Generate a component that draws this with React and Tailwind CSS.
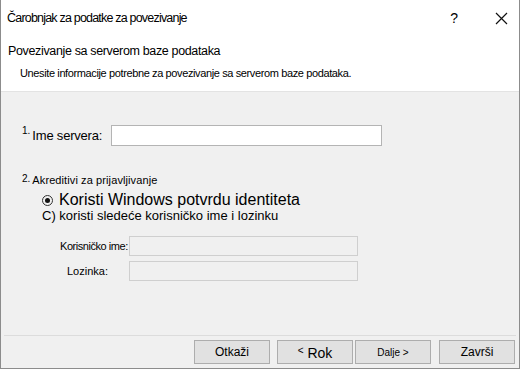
import React from 'react';

const font = { fontFamily: '"Liberation Sans", Arial, sans-serif' };

function Btn({ children, className = '' }) {
  return (
    <div className={`h-[24px] w-[76px] flex items-center justify-center bg-[#e1e1e1] border border-[#adadad] text-[#000] ${className}`}>
      {children}
    </div>
  );
}

export default function App() {
  return (
    <div className="w-[520px] h-[369px] flex flex-col bg-[#f0f0f0] border-l border-r border-b border-[#8c8c8c] text-black" style={font}>
      {/* Header */}
      <div className="h-[92px] bg-white border-b border-[#e3e3e3] flex flex-col">
        <div className="flex items-center pt-[10px] pl-[6px]">
          <div className="text-[12.5px] leading-[16px] tracking-[-0.8px] whitespace-nowrap">Čarobnjak za podatke za povezivanje</div>
          <div className="ml-auto text-[14px] leading-[16px] mr-[37px]">?</div>
          <svg width="13" height="13" viewBox="0 0 13 13" className="mr-[11px]">
            <path d="M1 1L12 12M12 1L1 12" stroke="#111" strokeWidth="1.2" />
          </svg>
        </div>
        <div className="mt-[17px] pl-[7px] text-[12.5px] leading-[16px] tracking-[-0.35px] whitespace-nowrap">Povezivanje sa serverom baze podataka</div>
        <div className="mt-[7px] pl-[19px] text-[11px] leading-[14px] tracking-[-0.38px] whitespace-nowrap">Unesite informacije potrebne za povezivanje sa serverom baze podataka.</div>
      </div>

      {/* Body */}
      <div className="flex-1 flex flex-col">
        <div className="flex items-center mt-[33px] pl-[21px]">
          <span className="text-[10px] leading-[10px] self-start mt-[1px] mr-[2px]">1.</span>
          <span className="text-[13px] leading-[20px] tracking-[-0.2px]">Ime servera:</span>
          <div className="ml-[9px] w-[271px] h-[21px] bg-white border border-[#b4b4b4]" />
        </div>

        <div className="flex items-end mt-[27px] pl-[21px]">
          <span className="text-[10px] leading-[12px] mr-[2px] self-start">2.</span>
          <span className="text-[11px] leading-[14px] tracking-[0.1px]">Akreditivi za prijavljivanje</span>
        </div>

        <div className="flex items-center pl-[41px] mt-[4px]">
          <div className="w-[11px] h-[11px] rounded-full border border-[#333] flex items-center justify-center">
            <div className="w-[5px] h-[5px] rounded-full bg-[#111]" />
          </div>
          <span className="ml-[6px] text-[16px] leading-[18px]">Koristi Windows potvrdu identiteta</span>
        </div>
        <div className="pl-[41px] text-[13px] leading-[14px]">C) koristi sledeće korisničko ime i lozinku</div>

        <div className="flex items-center mt-[13px] pl-[59px]">
          <span className="w-[69px] text-[11px] leading-[14px] tracking-[-0.45px] whitespace-nowrap">Korisničko ime:</span>
          <div className="w-[229px] h-[20px] bg-[#f0f0f0] border border-[#cfcfcf]" />
        </div>
        <div className="flex items-center mt-[5px] pl-[59px]">
          <span className="w-[69px] pl-[7px] text-[11px] leading-[14px]">Lozinka:</span>
          <div className="w-[229px] h-[20px] bg-[#f0f0f0] border border-[#cfcfcf]" />
        </div>
      </div>

      {/* Footer */}
      <div className="h-[33px] mx-[3px] border-t border-[#dcdcdc] flex items-center justify-end pr-[1px]">
        <Btn className="text-[12px]">Otkaži</Btn>
        <Btn className="ml-[7px] text-[14px] w-[75px]"><span className="mt-[3px]"><span className="text-[10px] align-top">&lt;</span> Rok</span></Btn>
        <Btn className="ml-[2px] text-[10px] w-[75px]">Dalje &gt;</Btn>
        <Btn className="ml-[8px] text-[12px]">Završi</Btn>
      </div>
    </div>
  );
}
